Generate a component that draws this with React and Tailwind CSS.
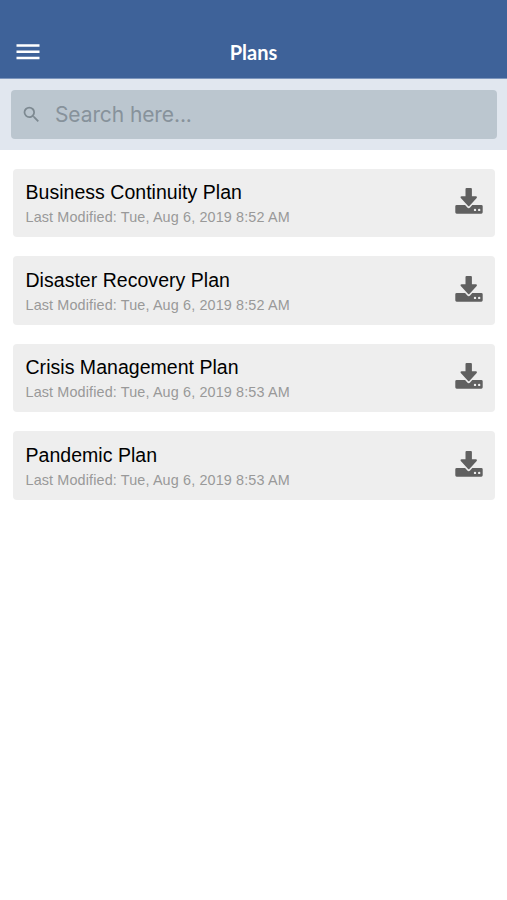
import React from 'react';
import { MdSearch } from 'react-icons/md';

const plans = [
    { id: 1, title: 'Business Continuity Plan', modified: 'Tue, Aug 6, 2019 8:52 AM' },
    { id: 2, title: 'Disaster Recovery Plan', modified: 'Tue, Aug 6, 2019 8:52 AM' },
    { id: 3, title: 'Crisis Management Plan', modified: 'Tue, Aug 6, 2019 8:53 AM' },
    { id: 4, title: 'Pandemic Plan', modified: 'Tue, Aug 6, 2019 8:53 AM' },
];

function MenuIcon() {
    return (<svg viewBox="0 0 24 18" className="h-[18px] w-6" fill="currentColor">
            <path d="M.5 1.2h23v2.5H.5zM.5 7.5h23v2.5H.5zM.5 13.8h23v2.5H.5z"/>
        </svg>);
}

function DownloadIcon() {
    return (<svg viewBox="0 0 28 27" className="h-[27px] w-7" fill="currentColor">
            <path d="M11.5 0h4.4a1 1 0 0 1 1 1v7.3h4c1 0 1.4.9.8 1.6l-7.1 7.9a1.1 1.1 0 0 1-1.7 0l-7.1-7.9c-.6-.7-.2-1.6.8-1.6h3.9V1a1 1 0 0 1 1-1z"/>
            <path fillRule="evenodd" d="M1.7 16.9h8.4l2 2.3a2.1 2.1 0 0 0 3.2 0l2-2.3h9a1.4 1.4 0 0 1 1.4 1.4v6a1.4 1.4 0 0 1-1.4 1.4H1.7A1.4 1.4 0 0 1 .3 24.3v-6a1.4 1.4 0 0 1 1.4-1.4zM18.8 21.9a1.2 1.2 0 1 0 2.4 0 1.2 1.2 0 0 0-2.4 0zm4.2 0a1.2 1.2 0 1 0 2.4 0 1.2 1.2 0 0 0-2.4 0z"/>
        </svg>);
}

export default function App() {
    return (<div className="min-h-screen bg-white font-['Liberation_Sans',Arial,sans-serif]">
            <header className="h-[79px] border-b border-[#7d96bd] bg-[#3e6299] pt-[26px]">
                <div className="grid h-[52px] grid-cols-[56px_1fr_56px] items-center text-white">
                    <button className="flex justify-center"><MenuIcon /></button>
                    <h1 className="text-center font-['Lato',sans-serif] text-[20px] font-bold leading-6">Plans</h1>
                </div>
            </header>

            <div className="h-[71px] bg-[#e1e7ef] pl-[11px] pr-[10px] pt-[11px]">
                <label className="flex h-[49px] items-center rounded-[4px] bg-[#bbc6cf] pl-[10px]">
                    <MdSearch className="h-[21px] w-[21px] shrink-0 text-[#7d8991]"/>
                    <input type="search" placeholder="Search here..." className="ml-[13px] w-full bg-transparent font-['Inter',sans-serif] text-[21px] tracking-[-0.1px] placeholder-[#87929b] outline-none"/>
                </label>
            </div>

            <main className="space-y-[19px] pl-[13px] pr-[12.5px] pt-[18.5px]">
                {plans.map(p => (<div key={p.id} className="flex h-[68.5px] items-start justify-between rounded-[4px] bg-[#eeeeee] pl-[12.5px] pr-[11.5px]">
                        <div className="pt-[11.5px]">
                            <h2 className="text-[19.5px] leading-6 tracking-[0.03px] text-black">{p.title}</h2>
                            <p className="text-[14.4px] leading-[26.5px] tracking-[0.13px] text-[#999999]">Last Modified: {p.modified}</p>
                        </div>
                        <div className="pt-[19.5px] text-[#606060]"><DownloadIcon /></div>
                    </div>))}
            </main>
        </div>);
}
